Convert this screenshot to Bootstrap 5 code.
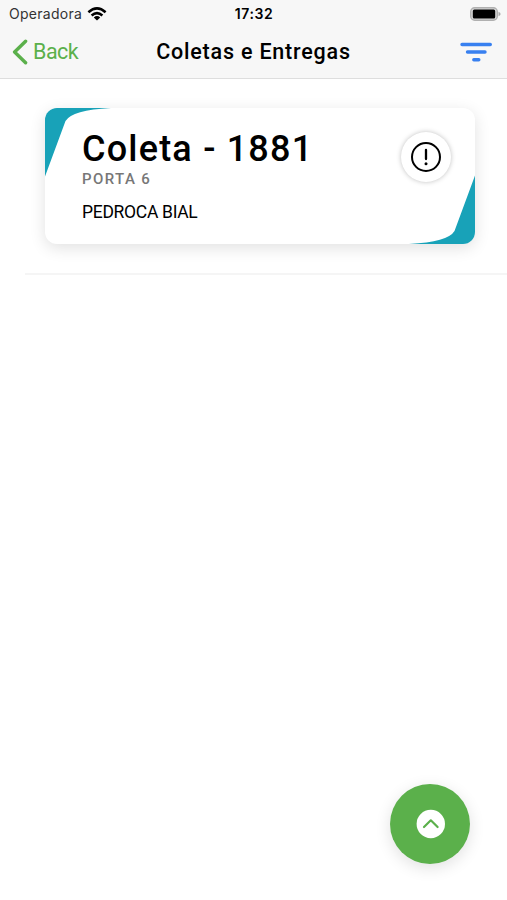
<!DOCTYPE html>
<html lang="pt-BR">
<head>
<meta charset="utf-8">
<meta name="viewport" content="width=device-width, initial-scale=1">
<title>Coletas e Entregas</title>
<link href="https://cdn.jsdelivr.net/npm/bootstrap@5.3.0/dist/css/bootstrap.min.css" rel="stylesheet">
<style>
body { font-family: Roboto, "Liberation Sans", sans-serif; color: #000; }
svg { display: block; flex: none; }
.app-head { height: 79px; background: #f7f7f7; border-bottom: 1px solid #dedede; }
.status-row { height: 27px; padding: 0 6px 0 9px; font-family: Inter, "Liberation Sans", sans-serif; font-size: 14px; line-height: 27px; }
.status-side { flex: 1 1 0; }
.carrier { color: #333; letter-spacing: .28px; }
.clock { font-weight: 600; letter-spacing: .6px; margin-right: 2px; }
.title-row { height: 50px; padding: 0 15px 0 12px; }
.back-link { color: #5bb04b; font-size: 21.5px; line-height: 50px; gap: 5px; letter-spacing: -.5px; }
.page-title { font-size: 21.5px; font-weight: 500; letter-spacing: .8px; line-height: 50px; padding-left: 3px; }
.delivery-item { height: 196px; margin-left: 25px; padding: 29px 32px 0 20px; border-bottom: 2px solid #f5f5f5; }
.delivery-card { height: 136px; border-radius: 12px; box-shadow: 0 4px 16px rgba(0,0,0,.12); overflow: hidden; }
.corner { position: absolute; }
.corner-tl { left: 0; top: 0; }
.corner-br { right: 0; bottom: 0; }
.delivery-body { padding: 20px 24px 0 37px; }
.delivery-title { font-size: 36px; font-weight: 500; line-height: 43px; letter-spacing: 1.2px; }
.delivery-gate { font-size: 15px; font-weight: 500; line-height: 17px; letter-spacing: 1.4px; color: #777; }
.delivery-name { font-size: 17.5px; line-height: 20px; margin-top: 14px; letter-spacing: -.3px; }
.alert-dot { width: 50px; height: 50px; margin-top: 4px; box-shadow: 0 0 5px rgba(0,0,0,.25); }
.fab { width: 80px; height: 80px; right: 37px; bottom: 36.5px; background: #5bb04b; box-shadow: 0 4px 16px rgba(0,0,0,.12); }
</style>
</head>
<body class="bg-white">
<header class="app-head">
  <div class="status-row d-flex align-items-center">
    <div class="status-side d-flex align-items-center">
      <span class="carrier">Operadora</span>
      <svg class="ms-1" width="21" height="14" viewBox="-1 0 21 14" fill="none" stroke="#000" stroke-width="2.5"><path d="M1.4 5.2Q10-2.5 18.6 5.2M4.6 8.5Q10 3.8 15.4 8.5"/><path d="M6.8 10.4Q10 7.8 13.2 10.4L10 13.6Z" fill="#000" stroke="none"/></svg>
    </div>
    <span class="clock">17:32</span>
    <div class="status-side d-flex justify-content-end">
      <svg width="31" height="14" viewBox="0 0 31 14"><rect x=".7" y=".7" width="26.6" height="12.6" rx="4" fill="#d8d8d8" stroke="#b0b0b0" stroke-width="1.4"/><rect x="2.8" y="2.5" width="22.4" height="9" rx="1.5"/><path d="M28.5 4.8Q30.6 5.6 30.6 7T28.5 9.2Z" fill="#aaa"/></svg>
    </div>
  </div>
  <div class="title-row d-flex align-items-center">
    <a class="back-link status-side d-flex align-items-center text-decoration-none" href="#">
      <svg width="16" height="26" viewBox="0 0 16 26" fill="none" stroke="#5bb04b" stroke-width="3.4" stroke-linejoin="round" stroke-linecap="round"><path d="M13.6 2.2L2.6 13L13.6 23.8"/></svg>
      <span>Back</span>
    </a>
    <h1 class="page-title m-0">Coletas e Entregas</h1>
    <div class="status-side d-flex justify-content-end">
      <svg width="32" height="20" viewBox="0 0 32 20" stroke="#3880f0" stroke-width="3.4" stroke-linecap="round"><path d="M2 2.5H30.3M7.5 10H25M13.8 17.7H18.8"/></svg>
    </div>
  </div>
</header>
<main>
  <div class="delivery-item">
    <article class="delivery-card position-relative bg-white">
      <svg class="corner corner-tl" width="68" height="69" viewBox="0 0 68 69" fill="#18a2b8"><path d="M0 0H66Q27 2 20.5 13L0 68.5Z"/></svg>
      <svg class="corner corner-br" width="68" height="69" viewBox="0 0 68 69" fill="#18a2b8"><path d="M68 69H2Q41 67 47.5 56L68 .5Z"/></svg>
      <div class="delivery-body d-flex justify-content-between position-relative">
        <div>
          <h2 class="delivery-title m-0">Coleta - 1881</h2>
          <div class="delivery-gate">PORTA 6</div>
          <div class="delivery-name">PEDROCA BIAL</div>
        </div>
        <div class="alert-dot rounded-circle bg-white d-flex align-items-center justify-content-center">
          <svg width="32" height="32" viewBox="0 0 32 32" fill="none" stroke="#000" stroke-linecap="round"><circle cx="16" cy="16" r="14" stroke-width="2"/><path d="M16 9V18" stroke-width="2.3"/><circle cx="16" cy="22.7" r="1.5" fill="#000" stroke="none"/></svg>
        </div>
      </div>
    </article>
  </div>
</main>
<button class="fab position-fixed border-0 p-0 rounded-circle d-flex align-items-center justify-content-center" type="button" aria-label="Subir">
  <svg width="30" height="30" viewBox="0 0 30 30" fill="none"><circle cx="15.8" cy="15" r="14.2" fill="#fff"/><path d="M9 18L15.8 11.3L22.6 18" stroke="#5bb04b" stroke-width="2.2" stroke-linecap="round" stroke-linejoin="round"/></svg>
</button>
<script src="https://cdn.jsdelivr.net/npm/bootstrap@5.3.0/dist/js/bootstrap.bundle.min.js"></script>
</body>
</html>
